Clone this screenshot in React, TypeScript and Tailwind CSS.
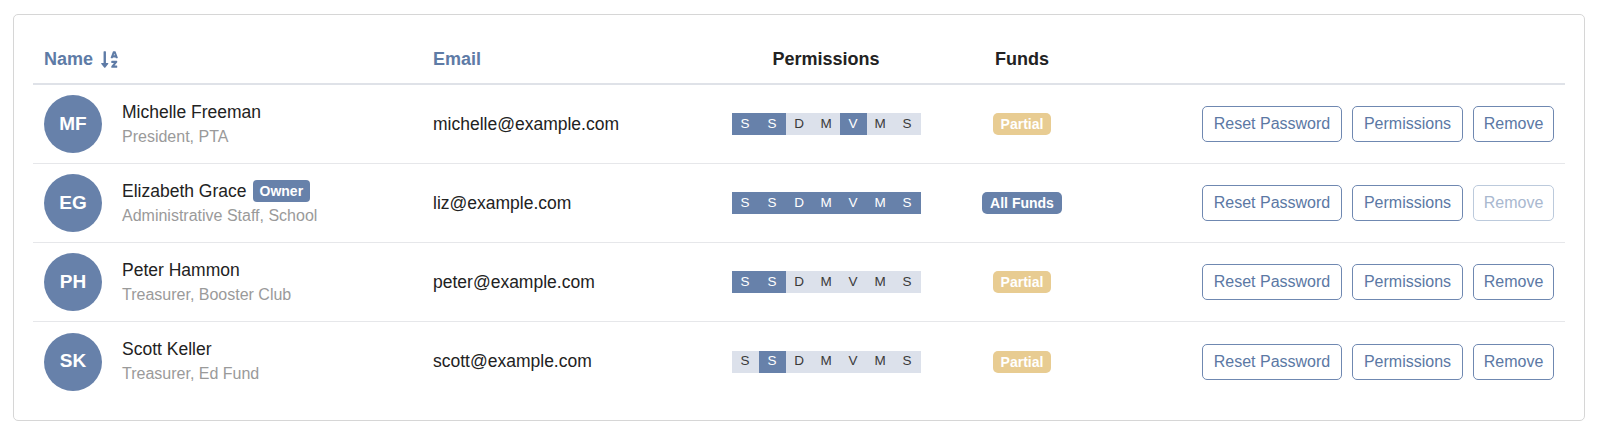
import React from "react";
import { FaSortAlphaDown } from "react-icons/fa";

type User = {
  initials: string;
  name: string;
  role: string;
  email: string;
  owner?: boolean;
  perms: boolean[];
  allFunds: boolean;
  removeDisabled?: boolean;
};

const letters = ["S", "S", "D", "M", "V", "M", "S"];

const users: User[] = [
  {
    initials: "MF",
    name: "Michelle Freeman",
    role: "President, PTA",
    email: "michelle@example.com",
    perms: [true, true, false, false, true, false, false],
    allFunds: false,
  },
  {
    initials: "EG",
    name: "Elizabeth Grace",
    role: "Administrative Staff, School",
    email: "liz@example.com",
    owner: true,
    perms: [true, true, true, true, true, true, true],
    allFunds: true,
    removeDisabled: true,
  },
  {
    initials: "PH",
    name: "Peter Hammon",
    role: "Treasurer, Booster Club",
    email: "peter@example.com",
    perms: [true, true, false, false, false, false, false],
    allFunds: false,
  },
  {
    initials: "SK",
    name: "Scott Keller",
    role: "Treasurer, Ed Fund",
    email: "scott@example.com",
    perms: [false, true, false, false, false, false, false],
    allFunds: false,
  },
];

function Row({ u, last }: { u: User; last: boolean }) {
  return (
    <div
      className={`flex items-center h-[79px] ${
        last ? "" : "border-b border-[#e6e7ea]"
      }`}
    >
      <div className="w-[388px] pl-[11px] flex items-center gap-[20px]">
        <div className="w-[58px] h-[58px] rounded-full bg-[#6781aa] flex items-center justify-center text-white font-bold text-[19px]">
          {u.initials}
        </div>
        <div className="flex flex-col">
          <div className="flex items-center gap-[6px] text-[17.5px] leading-[24px] text-[#222]">
            <span>{u.name}</span>
            {u.owner && (
              <span className="h-[22px] px-[7px] rounded-[4px] bg-[#6781aa] text-white text-[14px] font-bold leading-[22px]">
                Owner
              </span>
            )}
          </div>
          <div className="text-[16px] leading-[24px] text-[#9a9a9a] mt-[1px]">
            {u.role}
          </div>
        </div>
      </div>
      <div className="w-[280px] pl-[12px] text-[17.5px] text-[#222]">
        {u.email}
      </div>
      <div className="w-[250px] flex justify-center">
        <div className="flex">
          {letters.map((l, i) => (
            <div
              key={i}
              className={`w-[27px] h-[22px] flex items-center justify-center text-[13.5px] ${
                u.perms[i]
                  ? "bg-[#6781aa] text-white"
                  : "bg-[#dce1eb] text-[#3a3a3a]"
              }`}
            >
              {l}
            </div>
          ))}
        </div>
      </div>
      <div className="w-[142px] flex justify-center">
        {u.allFunds ? (
          <span className="h-[22px] px-[8px] rounded-[5px] bg-[#6781aa] text-white text-[14px] font-bold leading-[22px]">
            All Funds
          </span>
        ) : (
          <span className="h-[22px] px-[8px] rounded-[5px] bg-[#e8cc92] text-white text-[14px] font-bold leading-[22px]">
            Partial
          </span>
        )}
      </div>
      <div className="flex-1 flex justify-end gap-[10px] pr-[11px]">
        <button className="h-[36px] w-[140px] rounded-[5px] border border-[#6f88b1] text-[#5b78a4] text-[16px]">
          Reset Password
        </button>
        <button className="h-[36px] w-[111px] rounded-[5px] border border-[#6f88b1] text-[#5b78a4] text-[16px]">
          Permissions
        </button>
        <button
          className={`h-[36px] w-[81px] rounded-[5px] border text-[16px] ${
            u.removeDisabled
              ? "border-[#bccadc] text-[#a9b8cf]"
              : "border-[#6f88b1] text-[#5b78a4]"
          }`}
        >
          Remove
        </button>
      </div>
    </div>
  );
}

export default function App() {
  return (
    <div
      className="bg-white pt-[14px] pl-[13px] pr-[15px] pb-[14px]"
      style={{ fontFamily: '"Liberation Sans", Arial, sans-serif' }}
    >
      <div className="border border-[#d6d6d6] rounded-[5px] px-[19px] pt-[20px] pb-[19px]">
        <div className="flex items-center h-[50px] border-b-2 border-[#dfe2e8] text-[18px] font-bold">
          <div className="w-[388px] pl-[11px] flex items-center gap-[7px] text-[#5e7ba6]">
            <span>Name</span>
            <FaSortAlphaDown className="w-[19px] h-[19px]" />
          </div>
          <div className="w-[280px] pl-[12px] text-[#5e7ba6]">Email</div>
          <div className="w-[250px] text-center text-[#222]">Permissions</div>
          <div className="w-[142px] text-center text-[#222]">Funds</div>
          <div className="flex-1" />
        </div>
        {users.map((u, i) => (
          <Row key={i} u={u} last={i === users.length - 1} />
        ))}
      </div>
    </div>
  );
}
